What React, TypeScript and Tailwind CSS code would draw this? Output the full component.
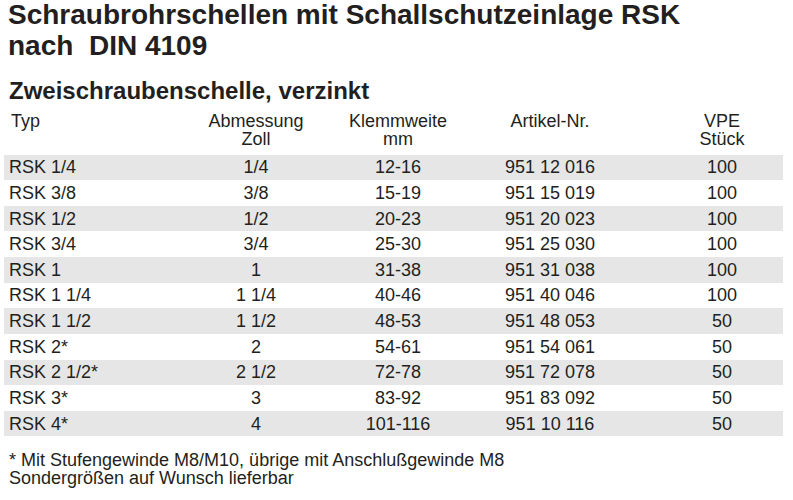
import React from "react";

const rows: [string, string, string, string, string][] = [
  ["RSK 1/4", "1/4", "12-16", "951 12 016", "100"],
  ["RSK 3/8", "3/8", "15-19", "951 15 019", "100"],
  ["RSK 1/2", "1/2", "20-23", "951 20 023", "100"],
  ["RSK 3/4", "3/4", "25-30", "951 25 030", "100"],
  ["RSK 1", "1", "31-38", "951 31 038", "100"],
  ["RSK 1 1/4", "1 1/4", "40-46", "951 40 046", "100"],
  ["RSK 1 1/2", "1 1/2", "48-53", "951 48 053", "50"],
  ["RSK 2*", "2", "54-61", "951 54 061", "50"],
  ["RSK 2 1/2*", "2 1/2", "72-78", "951 72 078", "50"],
  ["RSK 3*", "3", "83-92", "951 83 092", "50"],
  ["RSK 4*", "4", "101-116", "951 10 116", "50"],
];

const grid = "grid grid-cols-[182px_140px_144px_160px_153px]";

export default function App() {
  return (
    <div
      className="w-[793px] h-[500px] bg-white text-[#231f20] overflow-hidden"
      style={{ fontFamily: '"Liberation Sans", Arial, sans-serif' }}
    >
      <div className="-mt-px pl-[8px] font-bold text-[28px] leading-[31px]">
        <div>Schraubrohrschellen mit Schallschutzeinlage RSK</div>
        <div className="whitespace-pre">nach  DIN 4109</div>
      </div>
      <div className="pl-[9px] pt-[17px] font-bold text-[24px] leading-[26px]">
        Zweischraubenschelle, verzinkt
      </div>
      <div className="pl-[4px] w-[783px]">
        <div className={`${grid} text-[18px] leading-[18px] pt-[7.5px] pb-[7px]`}>
          <div className="pl-[7px]">Typ</div>
          <div className="text-center">Abmessung<br />Zoll</div>
          <div className="text-center">Klemmweite<br />mm</div>
          <div className="text-center">Artikel-Nr.</div>
          <div className="text-center pl-[31px]">VPE<br />Stück</div>
        </div>
        {rows.map((r, i) => (
          <div
            key={i}
            className={`${grid} h-[25.64px] items-center text-[18px] leading-[20px] ${i % 2 === 0 ? "bg-[#e6e6e7]" : "bg-white"}`}
          >
            <div className="pl-[5px]">{r[0]}</div>
            <div className="text-center">{r[1]}</div>
            <div className="text-center">{r[2]}</div>
            <div className="text-center">{r[3]}</div>
            <div className="text-center pl-[31px]">{r[4]}</div>
          </div>
        ))}
      </div>
      <div className="pl-[9px] pt-[15px] text-[18px] leading-[18px]">
        <div>* Mit Stufengewinde M8/M10, übrige mit Anschlußgewinde M8</div>
        <div>Sondergrößen auf Wunsch lieferbar</div>
      </div>
    </div>
  );
}
